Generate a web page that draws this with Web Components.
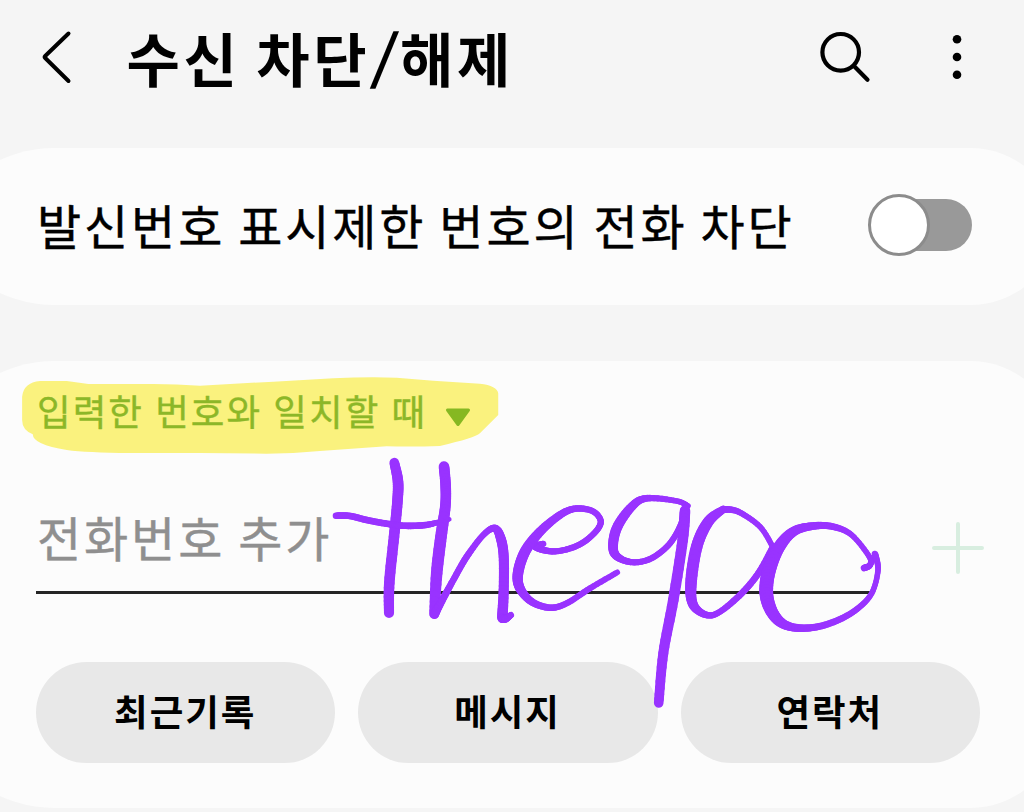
<!DOCTYPE html>
<html lang="ko">
<head>
<meta charset="utf-8">
<title>수신 차단/해제</title>
<style>
  body {
    margin: 0;
    width: 1024px;
    height: 812px;
    overflow: hidden;
    background: #f5f5f5;
    color: #000;
    font-family: "Noto Sans CJK KR", "Noto Sans", sans-serif;
  }
</style>
</head>
<body>
<block-page></block-page>

<script>
class AppHeader extends HTMLElement {
  constructor() {
    super();
    this.attachShadow({ mode: "open" }).innerHTML = `
    <style>
    :host {
      display: flex;
      align-items: center;
      box-sizing: border-box;
      height: 114px;
      padding: 0 60px 0 38.5px;
    }
    h1 {
      flex: 1;
      margin: 0 0 0 52px;
      padding-bottom: 1px;
      font-size: 58px;
      line-height: 60px;
      font-weight: 700;
      letter-spacing: 3.6px;
      word-spacing: -4px;
      white-space: nowrap;
    }
    ::slotted(span) {
      display: inline-block;
      margin: 0 -0.5px 0 4px;
      transform: skewX(-9deg);
    }
    svg {
      display: block;
      fill: none;
      stroke: #000;
      stroke-linecap: round;
      stroke-linejoin: round;
    }
    .more {
      margin-left: 78px;
      fill: #000;
      stroke: none;
    }
    </style>
    <svg width="36" height="56" viewBox="38 29 36 56" stroke-width="4"><path d="M67.5 33.5 44.2 56q-1 1 0 2l23.3 23"/></svg>
    <h1><slot></slot></h1>
    <svg width="54" height="54" viewBox="818 30 54 54" stroke-width="4.2"><circle cx="840.7" cy="52.3" r="18.3"/><path d="M854 66l13.5 13.7"/></svg>
    <svg class="more" width="14" height="50" viewBox="950 32 14 50"><circle cx="957" cy="39.3" r="4.3"/><circle cx="957" cy="57" r="4.3"/><circle cx="957" cy="74.7" r="4.3"/></svg>`;
  }
}

class SettingsCard extends HTMLElement {
  constructor() {
    super();
    // The card runs past both screen edges, only part of each corner is seen
    this.attachShadow({ mode: "open" }).innerHTML = `
    <style>
    :host {
      display: block;
      box-sizing: border-box;
      margin: 0 -31px 0 -48px;
      padding: 0 75px 0 84px;
      background: #fcfcfc;
      border-radius: 103px 85px 85px 103px / 78px;
    }
    </style>
    <slot></slot>`;
  }
}

class SwitchRow extends HTMLElement {
  constructor() {
    super();
    this.attachShadow({ mode: "open" }).innerHTML = `
    <style>
    :host {
      display: flex;
      align-items: center;
      justify-content: space-between;
      box-sizing: border-box;
      height: 157px;
      padding: 0 8px 4px 1px;
    }
    .label {
      padding-bottom: 2px;
      font-size: 48px;
      line-height: 60px;
      letter-spacing: 2.9px;
      word-spacing: -3.4px;
      -webkit-text-stroke: 0.4px;
      white-space: nowrap;
    }
    .track {
      display: flex;
      align-items: center;
      width: 98px;
      height: 52px;
      border-radius: 26px;
      background: #999;
    }
    .knob {
      box-sizing: border-box;
      flex: none;
      width: 62px;
      height: 62px;
      margin-left: -6px;
      border: 3px solid #8c8c8c;
      border-radius: 50%;
      background: #fff;
    }
    </style>
    <span class="label"><slot></slot></span>
    <span class="track"><span class="knob"></span></span>`;
  }
}

class MatchSelect extends HTMLElement {
  constructor() {
    super();
    this.attachShadow({ mode: "open" }).innerHTML = `
    <style>
    :host {
      display: flex;
      align-items: center;
      position: relative;
      height: 103px;
      color: #8cb728;
      font-size: 36.5px;
      line-height: 44px;
      letter-spacing: 2.1px;
      word-spacing: -1.2px;
      white-space: nowrap;
    }
    .marker {
      position: absolute;
      left: -14px;
      top: 16px;
      fill: #faf27e;
    }
    .label {
      position: relative;
      padding: 0 0 4px 1px;
      -webkit-text-stroke: 0.4px;
    }
    .arrow {
      position: relative;
      margin: 8px 0 0 17.5px;
      fill: #86b822;
      stroke: #86b822;
      stroke-width: 3;
      stroke-linejoin: round;
    }
    </style>
    <svg class="marker" width="477" height="77.3" viewBox="66 81 1431 232">
      <path d="M66 140Q70 98 120 93H200L265 102H460Q530 103 600 107L820 95 1000 85Q1100 80 1190 83L1300 92 1440 101Q1492 107 1495 130V195L1440 250Q1425 264 1320 288 1240 291 1160 289L960 303Q880 311 800 311L600 309H390Q260 308 200 300 98 284 98 253 66 240 66 210Z"/>
    </svg>
    <span class="label"><slot></slot></span>
    <svg class="arrow" width="26" height="20" viewBox="444 407 26 20"><path d="M446.5 410h21L457 424.5z"/></svg>`;
  }
}

class NumberField extends HTMLElement {
  constructor() {
    super();
    this.attachShadow({ mode: "open" }).innerHTML = `
    <style>
    :host {
      display: flex;
      align-items: flex-end;
      justify-content: space-between;
      height: 130px;
    }
    .input {
      box-sizing: border-box;
      width: 834px;
      height: 88px;
      padding-left: 1px;
      border-bottom: 3px solid #252525;
      color: #8f8f8f;
      font-size: 48px;
      line-height: 60px;
      letter-spacing: 2.9px;
      word-spacing: -3.4px;
      -webkit-text-stroke: 0.4px;
      white-space: nowrap;
    }
    svg {
      margin: 0 -4px 20px 0;
      stroke: #d8eee0;
      stroke-width: 4;
      stroke-linecap: round;
    }
    </style>
    <div class="input"><slot></slot></div>
    <svg width="52" height="52" viewBox="0 0 52 52"><path d="M26 2v48M2 26h48"/></svg>`;
  }
}

class PillButton extends HTMLElement {
  constructor() {
    super();
    this.attachShadow({ mode: "open" }).innerHTML = `
    <style>
    :host {
      display: block;
      flex: 1;
    }
    button {
      display: block;
      width: 100%;
      height: 101px;
      padding: 0 1px 4px 0;
      border: 0;
      border-radius: 51px;
      background: #e8e8e8;
      color: #000;
      font: 700 36.5px/44px "Noto Sans CJK KR", "Noto Sans", sans-serif;
      letter-spacing: 2px;
    }
    </style>
    <button><slot></slot></button>`;
  }
}

// Each stroke is a list of [x, y, pen width]
const STROKES = [
  [[394.3, 462.7, 9], [398, 481.7, 10], [397.3, 503.3, 10], [394, 536.7, 10], [389.3, 583, 10], [389, 613, 9.5]],
  [[336, 515.7, 6], [350, 516, 6], [366.7, 520, 6], [386.7, 523.7, 6], [403.3, 525.7, 6], [423.3, 525.3, 6], [436.7, 522.7, 5], [449.3, 519.3, 4]],
  [[444, 466.5, 10], [445.7, 486.7, 10], [445.3, 506.7, 10], [441, 536.7, 11], [436.7, 573.3, 11], [434.3, 614, 9.5]],
  [[434.3, 614, 9], [440.7, 603, 7], [453.3, 580, 6], [466.7, 556.7, 6], [483.3, 535, 5.5], [494.7, 528.3, 6.5], [500.7, 538.3, 9], [503.7, 556.7, 9.5], [503.7, 590, 9.5], [502.3, 617.5, 10]],
  [[502.3, 618.3, 9], [506, 618.5, 7], [511, 615, 5.5]],
  [[543.3, 543.8, 5.5], [535, 546.3, 6], [543.3, 550, 6], [556.7, 551.3, 5.5], [573.3, 547.3, 5.5], [586.7, 540, 5.5], [598.3, 528.3, 5.5], [600.3, 519.3, 5.5], [591.7, 510.7, 5.5], [575, 508.7, 6], [560, 515, 7], [540, 531.7, 8.5], [525, 551.7, 10], [518, 573.3, 10], [520, 588.3, 9], [531.7, 601.7, 7], [550, 607.7, 6], [566.7, 603.3, 5.5], [590, 588.3, 5.5], [617.3, 572.3, 5]],
  [[688, 506, 5], [676.7, 501, 5], [646.7, 498.3, 6], [631.7, 506.7, 8], [616.7, 528.3, 9.5], [613.3, 550, 9], [621.7, 559.3, 6.5], [636.7, 562.3, 5.5], [653.3, 557.3, 5.5], [670, 543.3, 5.5], [681.7, 523.3, 6], [685, 510, 9]],
  [[685, 511, 10], [682.7, 540, 10], [673.3, 600, 10], [663.3, 653.3, 9.5], [658.7, 703, 9]],
  [[723.3, 509.3, 6.5], [708.3, 521.7, 10], [696.7, 546.7, 11], [691, 583.3, 11], [693.3, 605, 9], [706.7, 615, 6], [720, 611.7, 5.5], [741.7, 593.3, 6], [758.3, 573.3, 6], [771.7, 548.3, 5]],
  [[723.3, 509.3, 6.5], [738.3, 511.7, 5.5], [760, 526.7, 5], [772.7, 546.7, 5]],
  [[864, 568, 6], [870, 565, 5.5], [869.3, 556.7, 5], [851.7, 535, 5], [833.3, 526.7, 6], [813.3, 526, 7], [793.3, 531.7, 9], [778.3, 548.3, 11.5], [768.3, 573.3, 13], [766.7, 596.7, 13], [775, 616.7, 11], [790, 626.7, 8], [813.3, 627.5, 6.5], [836.7, 620.7, 6], [856.7, 609.3, 5.5], [871.7, 593.3, 5], [878, 570, 5], [875, 554, 6]],
];

class InkLayer extends HTMLElement {
  constructor() {
    super();
    this.attachShadow({ mode: "open" });
  }

  connectedCallback() {
    this.shadowRoot.innerHTML = `
    <style>
    :host {
      display: block;
      position: absolute;
      left: 0;
      top: 0;
      pointer-events: none;
    }
    svg {
      display: block;
      stroke: #9933ff;
      stroke-linecap: round;
    }
    </style>
    <svg width="1024" height="812">${STROKES.map((s) => this.renderStroke(s)).join("")}</svg>`;
  }

  // Catmull-Rom curve through the points, cut into short lines so the width can change
  renderStroke(points) {
    const steps = 8;
    let lines = "";
    let last = points[0];
    for (let i = 0; i < points.length - 1; i++) {
      const b = points[i];
      const c = points[i + 1];
      const a = points[i - 1] || b;
      const d = points[i + 2] || c;
      for (let k = 1; k <= steps; k++) {
        const t = k / steps;
        const p = b.map((v, n) => 0.5 * (2 * v + (c[n] - a[n]) * t
          + (2 * a[n] - 5 * v + 4 * c[n] - d[n]) * t * t
          + (3 * v - a[n] - 3 * c[n] + d[n]) * t * t * t));
        lines += `<path d="M${last[0].toFixed(2)} ${last[1].toFixed(2)}L${p[0].toFixed(2)} ${p[1].toFixed(2)}" stroke-width="${(p[2] + 0.6).toFixed(2)}"/>`;
        last = p;
      }
    }
    return lines;
  }
}

class BlockPage extends HTMLElement {
  constructor() {
    super();
    this.attachShadow({ mode: "open" }).innerHTML = `
    <style>
    :host {
      display: flex;
      flex-direction: column;
      position: relative;
      width: 1024px;
      height: 812px;
      overflow: hidden;
    }
    app-header {
      margin-bottom: 34px;
    }
    .numbers {
      height: 447px;
      margin-top: 56px;
    }
    .buttons {
      display: flex;
      gap: 22.8px;
      margin-top: 68px;
    }
    </style>
    <app-header>수신 차단<span>/</span>해제</app-header>
    <settings-card>
      <switch-row>발신번호 표시제한 번호의 전화 차단</switch-row>
    </settings-card>
    <settings-card class="numbers">
      <match-select>입력한 번호와 일치할 때</match-select>
      <number-field>전화번호 추가</number-field>
      <div class="buttons">
        <pill-button>최근기록</pill-button>
        <pill-button>메시지</pill-button>
        <pill-button>연락처</pill-button>
      </div>
    </settings-card>
    <ink-layer></ink-layer>`;
  }
}

customElements.define("app-header", AppHeader);
customElements.define("settings-card", SettingsCard);
customElements.define("switch-row", SwitchRow);
customElements.define("match-select", MatchSelect);
customElements.define("number-field", NumberField);
customElements.define("pill-button", PillButton);
customElements.define("ink-layer", InkLayer);
customElements.define("block-page", BlockPage);
</script>
</body>
</html>
